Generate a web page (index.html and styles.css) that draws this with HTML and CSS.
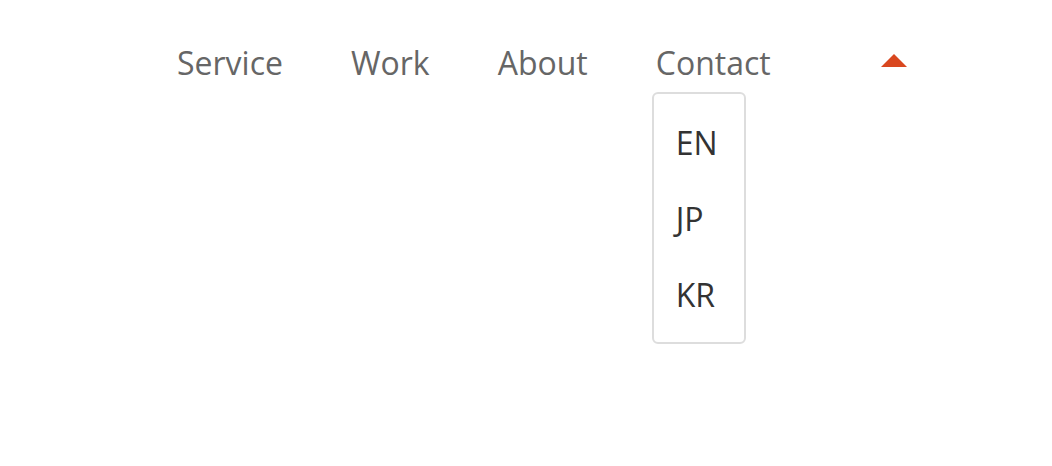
FILE: index.html
```html
<!DOCTYPE html>
<html lang="en">
<head>
<meta charset="utf-8">
<title>Nav</title>
<link rel="stylesheet" href="styles.css">
</head>
<body>
<nav class="nav">
  <ul class="menu">
    <li class="menu-item"><a href="#">Service</a></li>
    <li class="menu-item"><a href="#">Work</a></li>
    <li class="menu-item"><a href="#">About</a></li>
    <li class="menu-item has-sub">
      <a href="#">Contact</a>
      <ul class="lang-list">
        <li class="lang-item"><a href="#">EN</a></li>
        <li class="lang-item"><a href="#">JP</a></li>
        <li class="lang-item"><a href="#">KR</a></li>
      </ul>
    </li>
    <li class="menu-item toggle"><span class="caret" aria-hidden="true"></span></li>
  </ul>
</nav>
</body>
</html>
```

FILE: styles.css
```css
* { box-sizing: border-box; }

html, body {
  margin: 0;
  padding: 0;
  background: #fff;
  font-family: "Open Sans", "Liberation Sans", sans-serif;
}

body { min-height: 466px; }

a { text-decoration: none; color: inherit; }

.nav {
  padding: 41px 0 0 177px;
}

.menu {
  list-style: none;
  margin: 0;
  padding: 0;
  display: flex;
  align-items: flex-start;
  gap: 68px;
}

.menu-item {
  position: relative;
  font-size: 32px;
  line-height: 44px;
  color: #666;
}

.toggle {
  margin-left: 42px;
  height: 44px;
  display: flex;
  align-items: center;
}

.caret {
  display: block;
  width: 0;
  height: 0;
  border-left: 13px solid transparent;
  border-right: 13px solid transparent;
  border-bottom: 13px solid #d9471f;
  margin-top: -6px;
}

.lang-list {
  position: absolute;
  z-index: 10;
  top: 51px;
  left: -4px;
  width: 94px;
  margin: 0;
  padding: 11px 20px 9px 22px;
  list-style: none;
  background: #fff;
  border: 2px solid #ddd;
  border-radius: 6px;
}

.lang-item {
  display: block;
  padding: 16px 0;
  font-size: 32px;
  line-height: 44px;
  color: #333;
}
```
